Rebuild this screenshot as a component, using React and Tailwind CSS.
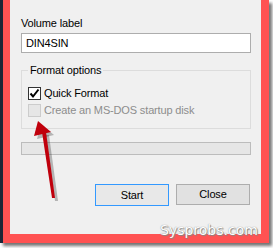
export default function App() {
  const font = { fontFamily: '"Liberation Sans", Arial, sans-serif' };
  return (
    <div className="relative w-[273px] h-[248px] bg-white overflow-hidden" style={font}>
      <div className="flex w-[269px] h-[243px] shadow-[3px_3px_3px_rgba(0,0,0,0.55)]">
        <div className="w-[3px] bg-[#1c2535]" />
        <div className="flex-1 border-l-[7px] border-r-[8px] border-b-[9px] border-[#ff5252] bg-[#f0f0f0]">
          <div className="pl-[11px] pr-[10px] pt-[16px] text-[11px] tracking-[-0.15px] leading-[15px] text-black">
            <div>Volume label</div>
            <div className="mt-[2px] h-[20px] w-[230px] border border-[#adadad] bg-white px-[4px] leading-[18px]">DIN4SIN</div>
            <div className="relative mt-[17px] h-[59px] w-[230px] border border-[#dcdcdc]">
              <div className="absolute left-[6px] top-[-8px] bg-[#f0f0f0] px-[2px]">Format options</div>
              <div className="pl-[6px] pt-[16px] flex flex-col gap-[4px]">
                <div className="flex items-center gap-[3px] h-[13px]">
                  <div className="w-[13px] h-[13px] border border-[#333] bg-white flex items-center justify-center">
                    <svg width="11" height="11" viewBox="0 0 11 11">
                      <path d="M1.5 5.5 L4 8.5 L9.5 1.5" stroke="black" strokeWidth="2" fill="none" />
                    </svg>
                  </div>
                  <span>Quick Format</span>
                </div>
                <div className="flex items-center gap-[3px] h-[13px]">
                  <div className="w-[13px] h-[13px] border border-[#cccccc] bg-[#e6e6e6]" />
                  <span className="text-[#8d8d8d]">Create an MS-DOS startup disk</span>
                </div>
              </div>
            </div>
            <div className="mt-[13px] h-[13px] w-[230px] border border-[#bcbcbc] bg-[#e6e6e6]" />
            <div className="mt-[29px] flex justify-end gap-[7px] pr-[1px]">
              <div className="w-[74px] h-[22px] border border-[#3399ff] bg-[#e8e8e8] flex items-center justify-center">Start</div>
              <div className="w-[74px] h-[21px] border border-[#adadad] bg-[#e1e1e1] flex items-center justify-center">Close</div>
            </div>
          </div>
        </div>
      </div>
      <svg className="absolute left-0 top-0" width="273" height="248" viewBox="0 0 273 248">
        <g transform="translate(3,3)" fill="rgba(0,0,0,0.25)" stroke="none">
          <polygon points="38,121 34,136 51,132" />
          <polygon points="42,132 46,132 55,198 52,198" />
        </g>
        <polygon points="38,121 34,136 51,132" fill="#c0000c" />
        <polygon points="42,132 46,132 55,198 52,198" fill="#c0000c" />
      </svg>
      <div
        className="absolute left-[160px] top-[222px] text-[14px] leading-[17px] text-white"
        style={{ fontFamily: '"DejaVu Sans", sans-serif', textShadow: '0 0 1px #777, 1px 1px 1px #888' }}
      >
        Sysprobs.com
      </div>
    </div>
  );
}
